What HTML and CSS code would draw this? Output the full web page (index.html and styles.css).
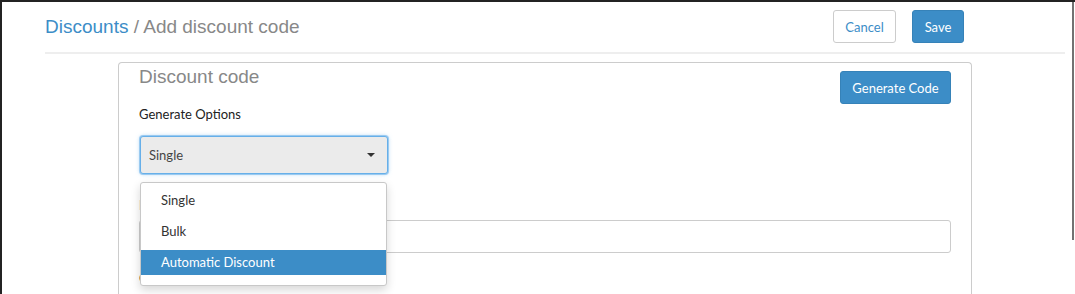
FILE: index.html
```html
<!DOCTYPE html>
<html lang="en">
<head>
<meta charset="utf-8">
<title>Add discount code</title>
<link rel="stylesheet" href="styles.css">
</head>
<body>
<div class="frame">
  <div class="page">
    <header class="topbar">
      <h1 class="title"><a class="crumb" href="#">Discounts</a> / Add discount code</h1>
      <div class="actions">
        <button class="btn btn-default">Cancel</button>
        <button class="btn btn-primary">Save</button>
      </div>
    </header>
    <div class="divider"></div>
    <section class="card">
      <div class="card-head">
        <h2 class="card-title">Discount code</h2>
        <button class="btn btn-primary btn-gen">Generate Code</button>
      </div>
      <div class="field">
        <label class="label">Generate Options</label>
        <div class="select-wrap">
          <div class="select">
            <span>Single</span>
            <span class="caret"></span>
          </div>
          <ul class="menu">
            <li class="item">Single</li>
            <li class="item">Bulk</li>
            <li class="item active">Automatic Discount</li>
          </ul>
        </div>
      </div>
      <div class="field field-code">
        <label class="label">Discount code</label>
        <input class="input" type="text">
      </div>
      <div class="field field-more">
        <label class="label">Customer eligibility</label>
      </div>
    </section>
  </div>
  <div class="scrollbar"></div>
</div>
</body>
</html>
```
FILE: styles.css
```css
* { box-sizing: border-box; }
html, body { margin: 0; padding: 0; background: #fff; }
body { font-family: "Lato", "Liberation Sans", sans-serif; color: #333; overflow: hidden; }

.frame {
  width: 1075px;
  height: 294px;
  border-top: 2px solid #232323;
  border-left: 2px solid #232323;
  position: relative;
  overflow: hidden;
}
.scrollbar {
  position: absolute;
  right: 1px;
  top: 0;
  width: 2px;
  height: 238px;
  background: #727272;
}

.page { padding-left: 43px; width: 1063px; }

.topbar {
  display: flex;
  align-items: center;
  justify-content: space-between;
  padding-top: 8px;
  padding-right: 101px;
  height: 41px;
}
.title {
  margin: 0;
  font-family: "Liberation Sans", Arial, sans-serif;
  font-weight: normal;
  font-size: 19px;
  color: #888;
  line-height: 22px;
}
.crumb { color: #3c8dc7; text-decoration: none; }
.actions { display: flex; gap: 16px; }

.btn {
  font-family: "Lato", "Liberation Sans", sans-serif;
  font-size: 13px;
  height: 33px;
  padding: 0 6px;
  border-radius: 3px;
  border: 1px solid transparent;
  cursor: pointer;
  white-space: nowrap;
}
.btn-default { background: #fff; border-color: #ccc; color: #3c8dc7; width: 63px; }
.btn-primary { background: #3c8dc7; border-color: #3682b8; color: #fff; width: 52px; }
.btn-gen { width: 111px; margin-top: 5px; }

.divider { height: 2px; background: #eee; margin-top: 9px; }

.card {
  margin-top: 8px;
  margin-left: 73px;
  width: 854px;
  height: 240px;
  border: 1px solid #ccc;
  border-bottom: none;
  border-radius: 4px 4px 0 0;
  padding: 3px 20px 0 20px;
}
.card-head { display: flex; justify-content: space-between; align-items: flex-start; }
.card-title {
  margin: 0;
  font-family: "Liberation Sans", Arial, sans-serif;
  font-weight: normal;
  font-size: 19px;
  line-height: 22px;
  color: #888;
}

.field { display: flex; flex-direction: column; align-items: flex-start; }
.label { font-size: 13px; line-height: 18px; color: #222; margin-top: 1px; }

.select-wrap { position: relative; margin-top: 13px; margin-left: 1px; }
.select {
  width: 248px;
  height: 38px;
  background: #ebebeb;
  border: 1px solid #66afe9;
  border-radius: 3px;
  box-shadow: 0 0 0 1px rgba(102, 175, 233, 0.55), 0 0 4px rgba(102, 175, 233, 0.6);
  display: flex;
  align-items: center;
  justify-content: space-between;
  padding: 0 12px 0 8px;
  font-size: 13px;
  color: #444;
}
.caret {
  width: 0; height: 0;
  border-left: 4px solid transparent;
  border-right: 4px solid transparent;
  border-top: 4px solid #333;
}
.menu {
  position: absolute;
  top: 46px;
  left: 0;
  width: 247px;
  height: 104px;
  margin: 0;
  list-style: none;
  padding: 5px 0 0 0;
  background: #fff;
  border: 1px solid #c8c8c8;
  border-radius: 3px;
  box-shadow: 0 4px 10px rgba(0, 0, 0, 0.16);
  z-index: 5;
  display: flex;
  flex-direction: column;
  gap: 6px;
}
.item {
  height: 25px;
  line-height: 25px;
  padding-left: 20px;
  font-size: 13px;
  color: #333;
}
.item.active { background: #3c8dc7; color: #fff; }

.field-code { margin-top: 21px; }
.input {
  margin-top: 6px;
  width: 812px;
  height: 33px;
  border: 1px solid #ccc;
  border-radius: 3px;
  background: #fff;
}
.field-more { margin-top: 15px; }
```
